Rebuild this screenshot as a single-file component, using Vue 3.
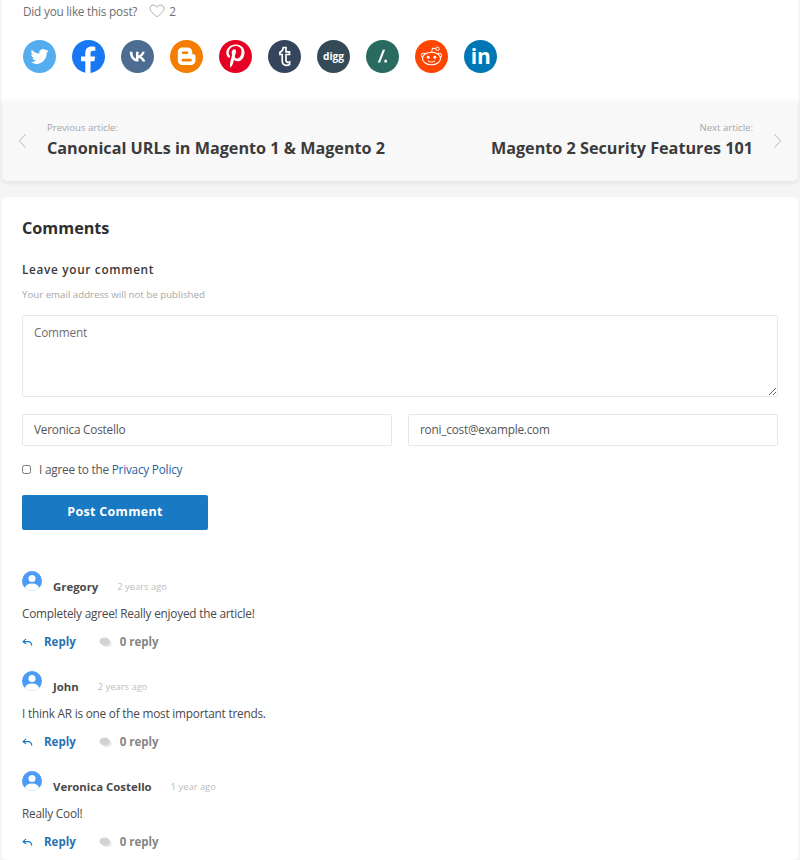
<template>
  <div class="page">
    <section class="card share-card">
      <div class="like-row">
        <span>Did you like this post?</span>
        <svg class="heart" viewBox="0 0 18 16" width="16" height="14">
          <path d="M9 14.6C5 11.4 1 8.6 1 5.2 1 2.8 2.8 1.2 4.8 1.2 6.6 1.2 8 2.2 9 3.8 10 2.2 11.4 1.2 13.2 1.2 15.2 1.2 17 2.8 17 5.2 17 8.6 13 11.4 9 14.6Z" fill="none" stroke="#a8a8a8" stroke-width="1.1" />
        </svg>
        <span class="like-count">2</span>
      </div>
      <div class="share-row">
        <svg viewBox="0 0 33 33" width="33" height="33">
          <circle cx="16.5" cy="16.5" r="16.5" fill="#55acee" />
          <path d="M25.5 10.8c-.7.3-1.4.5-2.1.6.8-.5 1.3-1.2 1.6-2-.7.4-1.5.7-2.3.9a3.7 3.7 0 0 0-6.3 3.4c-3-.2-5.8-1.6-7.6-3.9-1 1.7-.5 3.9 1.1 4.9-.6 0-1.2-.2-1.7-.5 0 1.8 1.3 3.3 3 3.7-.5.1-1.1.2-1.7.1.5 1.5 1.9 2.5 3.5 2.6a7.5 7.5 0 0 1-5.5 1.5 10.5 10.5 0 0 0 16.2-9.3c.7-.5 1.4-1.2 1.8-1.9Z" fill="#fff" />
        </svg>
        <svg viewBox="0 0 33 33" width="33" height="33">
          <circle cx="16.5" cy="16.5" r="16.5" fill="#1877f2" />
          <path d="M18.5 33V21.3h3.9l.7-4.8h-4.6v-3.1c0-1.3.6-2.6 2.7-2.6h2.1V6.7s-1.9-.3-3.7-.3c-3.8 0-6.3 2.3-6.3 6.4v3.7H9v4.8h4.3V33Z" fill="#fff" />
        </svg>
        <svg viewBox="0 0 33 33" width="33" height="33">
          <circle cx="16.5" cy="16.5" r="16.5" fill="#4c6c91" />
          <path d="M17.3 21.5c-5.3 0-8.4-3.7-8.6-9.8h2.7c.1 4.5 2 6.4 3.6 6.8v-6.8h2.5v3.9c1.5-.2 3.1-1.9 3.7-3.9h2.5c-.4 2.4-2.2 4.2-3.5 4.9 1.3.6 3.3 2.2 4.1 4.9h-2.8c-.6-1.8-2.1-3.2-4-3.4v3.4Z" fill="#fff" />
        </svg>
        <svg viewBox="0 0 33 33" width="33" height="33">
          <circle cx="16.5" cy="16.5" r="16.5" fill="#f57d00" />
          <path fill-rule="evenodd" d="M12.5 7.5h5c3 0 4.7 2 4.7 4.5v1.3c0 .7.5 1 1.1 1h.3c1 0 1.900.8 1.900 1.800v4.400c0 2.700-2.200 4.500-4.700 4.500h-8.300c-2.500 0-4.700-1.900-4.700-4.500v-8.500c0-2.500 2.200-4.500 4.700-4.500Zm.5 4a1.300 1.300 0 0 0 0 2.600h4a1.300 1.300 0 0 0 0-2.600Zm0 7.300a1.300 1.300 0 0 0 0 2.700h7.500a1.300 1.300 0 0 0 0-2.700Z" fill="#fff" />
        </svg>
        <svg viewBox="0 0 33 33" width="33" height="33">
          <circle cx="16.5" cy="16.5" r="16.5" fill="#e60023" />
          <path d="M17 4.5c-6.3 0-9.7 4.3-9.7 8.2 0 2.3.9 4.3 2.7 5 .3.1.6 0 .7-.3l.3-1.100c.1-.4 0-.5-.2-.8-.6-.7-1-1.500-1-2.800 0-3.600 2.700-6.700 6.900-6.700 3.700 0 5.800 2.300 5.800 5.300 0 4-1.800 7.300-4.400 7.300-1.400 0-2.500-1.200-2.200-2.600.4-1.700 1.200-3.600 1.200-4.800 0-1.100-.6-2-1.800-2-1.400 0-2.600 1.500-2.600 3.500 0 1.200.4 2.100.4 2.100l-1.800 7.300c-.5 2.200-.1 5 0 5.300.1.100.2.200.4.100.1-.2 1.800-2.300 2.400-4.300l.9-3.600c.5.900 1.800 1.700 3.300 1.700 4.300 0 7.200-3.900 7.200-9.100 0-4-3.300-7.700-8.500-7.700Z" fill="#fff" />
        </svg>
        <svg viewBox="0 0 33 33" width="33" height="33">
          <circle cx="16.5" cy="16.5" r="16.5" fill="#35465c" />
          <path d="M18 7.5v4.300h3.500v2.700H18v5.600c0 1.500.7 2.300 1.900 2.300.6 0 1.200-.2 1.700-.5v2.600c-.9.500-1.900.8-3.100.8-2.900 0-4.300-1.700-4.300-4.500v-6.300h-2.300v-2.100c1.900-.6 3-2.200 3.300-4.900Z" fill="none" stroke="#fff" stroke-width="1.7" />
        </svg>
        <svg viewBox="0 0 33 33" width="33" height="33">
          <circle cx="16.5" cy="16.5" r="16.5" fill="#354a57" />
          <text x="16.5" y="19.5" text-anchor="middle" textLength="21" lengthAdjust="spacingAndGlyphs" class="digg">digg</text>
        </svg>
        <svg viewBox="0 0 33 33" width="33" height="33">
          <circle cx="16.5" cy="16.5" r="16.5" fill="#2a6b61" />
          <path d="M16.8 9.8h2.300l-5 12.700h-2.300Z" fill="#fff" />
          <path d="M18.4 19.8h2.500v2.700h-2.500Z" fill="#fff" />
        </svg>
        <svg viewBox="0 0 33 33" width="33" height="33">
          <circle cx="16.5" cy="16.5" r="16.5" fill="#ff4500" />
          <path d="M16.5 12.8l1-4.800 3.400.8" fill="none" stroke="#fff" stroke-width="1" />
          <circle cx="22.5" cy="8.8" r="1.7" fill="#ff4500" stroke="#fff" stroke-width="1" />
          <circle cx="8.6" cy="15.5" r="2.3" fill="#ff4500" stroke="#fff" stroke-width="1" />
          <circle cx="24.4" cy="15.5" r="2.3" fill="#ff4500" stroke="#fff" stroke-width="1" />
          <ellipse cx="16.5" cy="18.5" rx="9" ry="6.3" fill="#ff4500" stroke="#fff" stroke-width="1.1" />
          <circle cx="13.2" cy="17.3" r="1.5" fill="#fff" />
          <circle cx="19.8" cy="17.3" r="1.5" fill="#fff" />
          <path d="M13 21c2 1.400 5 1.400 7 0" fill="none" stroke="#fff" stroke-width="1" />
        </svg>
        <svg viewBox="0 0 33 33" width="33" height="33">
          <circle cx="16.5" cy="16.5" r="16.5" fill="#0077b5" />
          <text x="16.8" y="24" text-anchor="middle" class="lin">in</text>
        </svg>
      </div>
    </section>

    <nav class="card article-nav">
      <svg class="chev" viewBox="0 0 10 18" width="9" height="16"><path d="M8.5 1.5 1.5 9l7 7.500" /></svg>
      <a class="article">
        <span class="article-label">Previous article:</span>
        <span class="article-title">Canonical URLs in Magento 1 &amp; Magento 2</span>
      </a>
      <a class="article article-next">
        <span class="article-label">Next article:</span>
        <span class="article-title">Magento 2 Security Features 101</span>
      </a>
      <svg class="chev" viewBox="0 0 10 18" width="9" height="16"><path d="M1.5 1.5 8.5 9l-7 7.500" /></svg>
    </nav>

    <section class="card comments-card">
      <h2>Comments</h2>
      <h3>Leave your comment</h3>
      <p class="note">Your email address will not be published</p>
      <form class="comment-form" @submit.prevent>
        <textarea class="field comment-box" placeholder="Comment"></textarea>
        <div class="field-row">
          <input class="field" type="text" value="Veronica Costello" />
          <input class="field" type="text" value="roni_cost@example.com" />
        </div>
        <label class="agree">
          <input type="checkbox" />
          <span>I agree to the <a class="policy">Privacy Policy</a></span>
        </label>
        <button class="post-btn" type="submit">Post Comment</button>
      </form>

      <div class="comment-list">
        <article v-for="c in comments" :key="c.name" class="comment">
          <div class="comment-head">
            <svg class="avatar" viewBox="0 0 20 20" width="20" height="20">
              <defs><clipPath id="avatar-clip"><circle cx="10" cy="10" r="10" /></clipPath></defs>
              <circle cx="10" cy="10" r="10" fill="#4b9cf5" />
              <circle cx="10" cy="7.5" r="3.5" fill="#fff" />
              <ellipse cx="10" cy="17" rx="7" ry="4.5" fill="#fff" clip-path="url(#avatar-clip)" />
            </svg>
            <span class="author">{{ c.name }}</span>
            <span class="time">{{ c.time }}</span>
          </div>
          <p class="body">{{ c.text }}</p>
          <div class="actions">
            <a class="reply">
              <svg viewBox="0 0 12 10" width="11" height="9"><path d="M4.5 1 1 4l3.5 2.600M1.300 4H7c2.200 0 3.500 1.500 3.800 4.500" fill="none" stroke="#1979c3" stroke-width="1.2" /></svg>
              Reply
            </a>
            <span class="count">
              <svg viewBox="0 0 14 12" width="13" height="11"><ellipse cx="8.5" cy="7" rx="5" ry="3.8" fill="#e6e6e6" /><ellipse cx="6" cy="4.8" rx="5.5" ry="4.3" fill="#d2d2d2" /></svg>
              0 reply
            </span>
          </div>
        </article>
      </div>
    </section>
  </div>
</template>

<script setup>
const comments = [
  { name: 'Gregory', time: '2 years ago', text: 'Completely agree! Really enjoyed the article!' },
  { name: 'John', time: '2 years ago', text: 'I think AR is one of the most important trends.' },
  { name: 'Veronica Costello', time: '1 year ago', text: 'Really Cool!' }
]
</script>

<style>
html,
body {
  margin: 0;
  background: #f5f5f5;
}
</style>

<style scoped>
.page {
  height: 860px;
  overflow: hidden;
  padding: 0 2px;
  box-sizing: border-box;
  font-family: "Open Sans", "Liberation Sans", sans-serif;
  font-size: 11.8px;
  letter-spacing: -0.22px;
  color: #3d3d3d;
}
.card {
  background: #fff;
  border-radius: 5px;
}
.share-card {
  height: 101px;
  padding: 0 21px;
  box-sizing: border-box;
  border-radius: 0;
}
.like-row {
  display: flex;
  align-items: center;
  height: 22px;
  color: #6f6f6f;
}
.heart {
  margin-left: 12px;
}
.like-count {
  margin-left: 4px;
}
.share-row {
  display: flex;
  gap: 16px;
  margin-top: 18px;
}
.digg {
  font-size: 10.5px;
  font-weight: 700;
  fill: #fff;
  letter-spacing: 0;
  font-family: "Open Sans", sans-serif;
}
.lin {
  font-size: 21px;
  font-weight: 700;
  fill: #fff;
  letter-spacing: 0;
  font-family: "Open Sans", sans-serif;
}
.article-nav {
  display: flex;
  align-items: center;
  height: 80px;
  padding: 0 16px;
  box-sizing: border-box;
  background: #f8f8f8;
  border-radius: 0 0 5px 5px;
  box-shadow: 0 2px 5px rgba(0, 0, 0, 0.08);
}
.chev {
  flex: none;
}
.chev path {
  fill: none;
  stroke: #c8c8c8;
  stroke-width: 1.2;
}
.article {
  flex: 1;
  display: flex;
  flex-direction: column;
  padding: 0 20px 3px;
}
.article-next {
  text-align: right;
}
.article-label {
  font-size: 9.6px;
  line-height: 14px;
  letter-spacing: 0;
  color: #a6a6a6;
}
.article-title {
  margin-top: 2px;
  font-size: 16.2px;
  line-height: 22px;
  letter-spacing: 0;
  font-weight: 700;
  color: #3b3b3b;
  white-space: nowrap;
}
.comments-card {
  margin-top: 16px;
  padding: 19px 20px 0;
  height: 663px;
  box-sizing: border-box;
}
h2 {
  margin: 0;
  font-size: 16.2px;
  line-height: 24px;
  letter-spacing: 0;
  font-weight: 700;
  color: #2e2e2e;
}
h3 {
  margin: 20px 0 0;
  font-size: 11.8px;
  line-height: 18px;
  font-weight: 600;
  letter-spacing: 0.68px;
  color: #3a3a3a;
}
.note {
  margin: 10px 0 0;
  font-size: 9.7px;
  line-height: 14px;
  letter-spacing: 0;
  color: #a8a8a8;
}
.comment-form {
  margin-top: 13px;
  display: flex;
  flex-direction: column;
}
.field {
  display: block;
  box-sizing: border-box;
  width: 100%;
  font-family: inherit;
  font-size: 11.8px;
  letter-spacing: -0.22px;
  color: #555;
  border: 1px solid #e8e8e8;
  border-radius: 2px;
  background: #fff;
  outline: none;
}
.field::placeholder {
  color: #6f6f6f;
  opacity: 1;
}
.comment-box {
  height: 82px;
  padding: 8px 11px;
  margin: 0;
}
.field-row {
  display: grid;
  grid-template-columns: 1fr 1fr;
  gap: 16px;
  margin-top: 17px;
}
.field-row .field {
  height: 32px;
  padding: 0 0 2px 11px;
}
.agree {
  display: flex;
  align-items: center;
  margin-top: 15px;
  height: 16px;
  color: #555;
}
.agree input {
  width: 9px;
  height: 9px;
  margin: 0 8px 0 0;
}
.policy {
  color: #2a5f9e;
}
.post-btn {
  margin-top: 18px;
  width: 186px;
  height: 35px;
  padding: 0 0 2px;
  border: 0;
  border-radius: 2px;
  background: #1979c3;
  color: #fff;
  font-family: inherit;
  font-size: 12.5px;
  font-weight: 700;
  letter-spacing: 0.3px;
}
.comment-list {
  margin-top: 41px;
}
.comment {
  height: 100px;
}
.comment-head {
  display: flex;
  align-items: flex-start;
  height: 24px;
}
.author {
  margin: 7px 0 0 11px;
  font-size: 11.4px;
  line-height: 18px;
  font-weight: 700;
  letter-spacing: 0;
  color: #4a4a4a;
}
.time {
  margin: 8px 0 0 19px;
  font-size: 9.4px;
  line-height: 16px;
  letter-spacing: 0;
  color: #bdbdbd;
}
.body {
  margin: 9px 0 0;
  line-height: 18px;
  color: #4a4a4a;
}
.actions {
  display: flex;
  align-items: center;
  gap: 23px;
  margin-top: 11px;
  font-size: 11.5px;
  line-height: 18px;
  letter-spacing: 0;
  font-weight: 700;
}
.reply {
  display: flex;
  align-items: center;
  gap: 11px;
  color: #2571b3;
}
.count {
  display: flex;
  align-items: center;
  gap: 8px;
  color: #858585;
}
</style>
